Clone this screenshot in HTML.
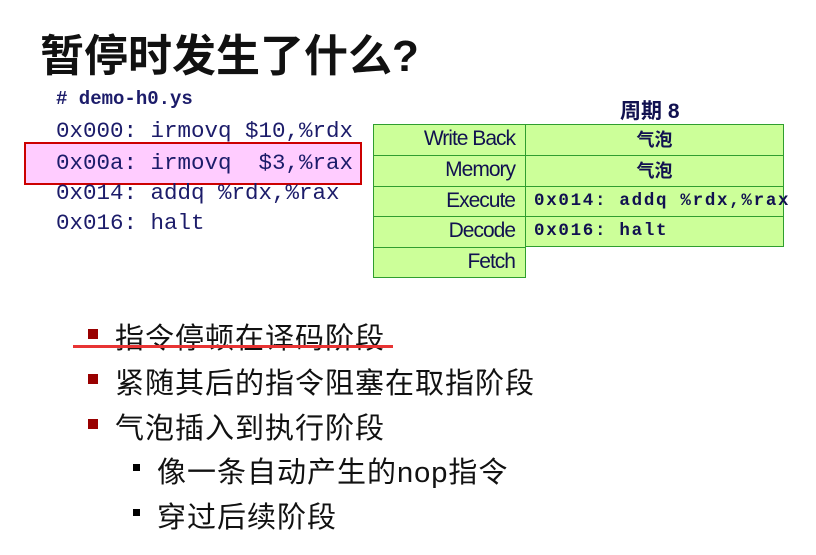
<!DOCTYPE html>
<html><head><meta charset="utf-8"><style>
body{margin:0;width:816px;height:555px;background:#fff;position:relative;overflow:hidden;font-family:"Liberation Sans","Noto Sans CJK SC",sans-serif}
.a{position:absolute;white-space:nowrap}
.code{font-family:"Liberation Mono",monospace;font-size:22.5px;color:#1c1c6a;left:56px}
.cell{position:absolute;background:#ccff99;border:1.5px solid #2f9e2f;box-sizing:border-box;color:#111150;white-space:nowrap;overflow:visible}
.lab{left:373px;width:153px;text-align:right;padding-right:10px;font-size:21px;letter-spacing:-1px;line-height:28px}
.val{left:525px;width:259px;font-family:"Liberation Mono","Noto Sans CJK SC",monospace;font-weight:bold;font-size:17.5px;letter-spacing:1.7px;line-height:28px;padding-left:8px}
.b{font-size:29px;color:#111;letter-spacing:1px}
.sq{position:absolute;width:10px;height:10px;background:#990000}
.sq2{position:absolute;width:7px;height:7px;background:#000}
</style></head><body>
<div class="a" style="left:40px;top:20px;font-size:44px;font-weight:bold;color:#111">暂停时发生了什么?</div>
<div class="a code" style="top:88px;font-weight:bold;font-size:19px;left:56px">#&nbsp;demo-h0.ys</div>
<div class="a code" style="top:118px">0x000: irmovq $10,%rdx</div>
<div class="a" style="left:24px;top:142px;width:338px;height:43px;background:#ffccff;border:2px solid #cc0000;box-sizing:border-box"></div>
<div class="a code" style="top:150px">0x00a: irmovq&nbsp; $3,%rax</div>
<div class="a code" style="top:180px">0x014: addq %rdx,%rax</div>
<div class="a code" style="top:210px">0x016: halt</div>
<div class="a" style="left:620px;top:95px;font-size:21px;font-weight:bold;color:#111150">周期 8</div>
<div class="cell lab" style="top:124px;height:32px">Write Back</div>
<div class="cell lab" style="top:155px;height:32px">Memory</div>
<div class="cell lab" style="top:186px;height:31px">Execute</div>
<div class="cell lab" style="top:216px;height:32px">Decode</div>
<div class="cell lab" style="top:247px;height:31px">Fetch</div>
<div class="cell val" style="top:124px;height:32px;text-align:center;padding:0;letter-spacing:0;font-family:'Noto Sans CJK SC',sans-serif;font-size:18px">气泡</div>
<div class="cell val" style="top:155px;height:32px;text-align:center;padding:0;letter-spacing:0;font-family:'Noto Sans CJK SC',sans-serif;font-size:18px">气泡</div>
<div class="cell val" style="top:186px;height:31px">0x014: addq %rdx,%rax</div>
<div class="cell val" style="top:216px;height:31px">0x016: halt</div>
<div class="sq" style="left:88px;top:329px"></div>
<div class="a b" style="left:115px;top:315px">指令停顿在译码阶段</div>
<div class="a" style="left:73px;top:345px;width:320px;height:3px;background:#e83434"></div>
<div class="sq" style="left:88px;top:374px"></div>
<div class="a b" style="left:115px;top:360px">紧随其后的指令阻塞在取指阶段</div>
<div class="sq" style="left:88px;top:419px"></div>
<div class="a b" style="left:115px;top:405px">气泡插入到执行阶段</div>
<div class="sq2" style="left:133px;top:464px"></div>
<div class="a b" style="left:157px;top:449px">像一条自动产生的nop指令</div>
<div class="sq2" style="left:133px;top:509px"></div>
<div class="a b" style="left:157px;top:494px">穿过后续阶段</div>
</body></html>
